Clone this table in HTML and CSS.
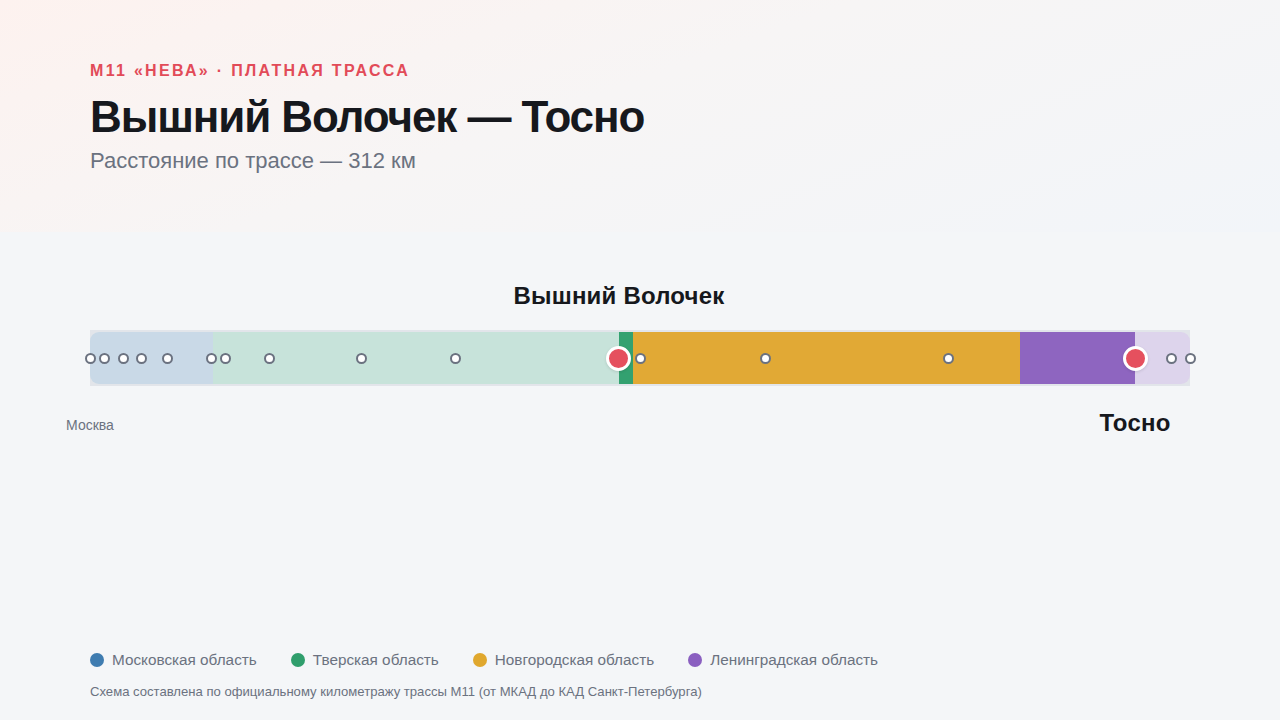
FILE: index.html
```html
<!DOCTYPE html>
<html lang="ru">
<head>
<meta charset="utf-8">
<link rel="stylesheet" href="styles.css">
</head>
<body>
<header class="hero">
  <div class="eyebrow">M11 «НЕВА» · ПЛАТНАЯ ТРАССА</div>
  <h1 class="title">Вышний Волочек — Тосно</h1>
  <div class="subtitle">Расстояние по трассе — 312 км</div>
</header>
<main class="chart">
  <div class="labels-top">
    <span class="city city-big" style="left:48.09%">Вышний Волочек</span>
  </div>
  <div class="track">
    <div class="seg seg-msk-f" style="width:11.18%"></div>
    <div class="seg seg-tver-f" style="width:36.91%"></div>
    <div class="seg seg-tver" style="width:1.27%"></div>
    <div class="seg seg-nov" style="width:35.18%"></div>
    <div class="seg seg-len" style="width:10.45%"></div>
    <div class="seg seg-len-f" style="width:5.01%"></div>
    <span class="dot" style="left:0%"></span>
    <span class="dot" style="left:1.36%"></span>
    <span class="dot" style="left:3.0%"></span>
    <span class="dot" style="left:4.64%"></span>
    <span class="dot" style="left:7.09%"></span>
    <span class="dot" style="left:11.09%"></span>
    <span class="dot" style="left:12.36%"></span>
    <span class="dot" style="left:16.36%"></span>
    <span class="dot" style="left:24.64%"></span>
    <span class="dot" style="left:33.27%"></span>
    <span class="dot" style="left:50.09%"></span>
    <span class="dot" style="left:61.45%"></span>
    <span class="dot" style="left:78.09%"></span>
    <span class="dot" style="left:98.36%"></span>
    <span class="dot" style="left:100%"></span>
    <span class="pin" style="left:48.09%"></span>
    <span class="pin" style="left:95.0%"></span>
  </div>
  <div class="labels-bottom">
    <span class="city city-small" style="left:0%">Москва</span>
    <span class="city city-big" style="left:95.0%">Тосно</span>
  </div>
</main>
<footer class="foot">
  <ul class="legend">
    <li class="legend-item"><span class="ldot ldot-msk"></span>Московская область</li>
    <li class="legend-item"><span class="ldot ldot-tver"></span>Тверская область</li>
    <li class="legend-item"><span class="ldot ldot-nov"></span>Новгородская область</li>
    <li class="legend-item"><span class="ldot ldot-len"></span>Ленинградская область</li>
  </ul>
  <p class="note">Схема составлена по официальному километражу трассы М11 (от МКАД до КАД Санкт-Петербурга)</p>
</footer>
</body>
</html>
```

FILE: styles.css
```css
* { box-sizing: border-box; }
html, body { margin: 0; padding: 0; }
body {
  width: 1280px;
  height: 720px;
  overflow: hidden;
  background: #f4f6f8;
  font-family: "Liberation Sans", Arial, sans-serif;
  color: #16181d;
  display: flex;
  flex-direction: column;
}
.hero {
  height: 232px;
  padding: 61px 90px 0;
  background: linear-gradient(160deg, #fdf2ef 0%, #f7f5f5 45%, #f2f5f9 100%);
}
.eyebrow {
  font-size: 16px;
  font-weight: 700;
  letter-spacing: 2.3px;
  color: #e24b58;
  line-height: 20px;
}
.title {
  margin: 11px 0 0;
  font-size: 44px;
  font-weight: 700;
  letter-spacing: -1.1px;
  line-height: 50px;
  color: #16181d;
}
.subtitle {
  margin-top: 6px;
  font-size: 22px;
  line-height: 26px;
  color: #6b7280;
}
.chart {
  margin: 50px 90px 0;
  width: 1100px;
}
.labels-top, .labels-bottom {
  position: relative;
  height: 48px;
}
.labels-bottom { height: 60px; }
.city {
  position: absolute;
  transform: translateX(-50%);
  white-space: nowrap;
}
.labels-top .city-big { top: 0; }
.city-big {
  font-size: 24px;
  font-weight: 700;
  letter-spacing: 0.2px;
  line-height: 28px;
  color: #16181d;
}
.labels-bottom .city-big { top: 23px; }
.city-small {
  top: 31px;
  font-size: 14px;
  line-height: 16px;
  color: #6b7280;
}
.track {
  position: relative;
  height: 56px;
  display: flex;
  border-top: 2px solid #e2e5ea;
  border-bottom: 2px solid #e2e5ea;
  background: #e2e5ea;
}
.seg { height: 100%; }
.seg-msk-f { background: #c9d9e7; border-radius: 9px 0 0 9px; }
.seg-tver-f { background: #c7e3da; }
.seg-tver { background: #33a170; }
.seg-nov { background: #e1a935; }
.seg-len { background: #8e65c0; }
.seg-len-f { background: #ddd4ec; border-radius: 0 9px 9px 0; }
.dot {
  position: absolute;
  top: 50%;
  width: 11px;
  height: 11px;
  margin: -5.5px 0 0 -5.5px;
  border-radius: 50%;
  background: #ffffff;
  border: 2px solid #6b7280;
}
.pin {
  position: absolute;
  top: 50%;
  width: 25px;
  height: 25px;
  margin: -12.5px 0 0 -12.5px;
  border-radius: 50%;
  background: #e5505e;
  border: 3px solid #ffffff;
  box-shadow: 0 1px 3px rgba(0,0,0,0.12);
}
.foot {
  margin-top: auto;
  padding: 0 90px 20px;
}
.legend {
  list-style: none;
  margin: 0;
  padding: 0;
  display: flex;
  gap: 34px;
}
.legend-item {
  display: flex;
  align-items: center;
  gap: 8px;
  font-size: 15.3px;
  line-height: 18px;
  color: #6b7280;
}
.ldot {
  width: 14px;
  height: 14px;
  border-radius: 50%;
  display: inline-block;
}
.ldot-msk { background: #3f7cb0; }
.ldot-tver { background: #2f9e6c; }
.ldot-nov { background: #e0a82e; }
.ldot-len { background: #8a5fc0; }
.note {
  margin: 15px 0 0;
  font-size: 13.1px;
  line-height: 16px;
  color: #6b7280;
}
```
